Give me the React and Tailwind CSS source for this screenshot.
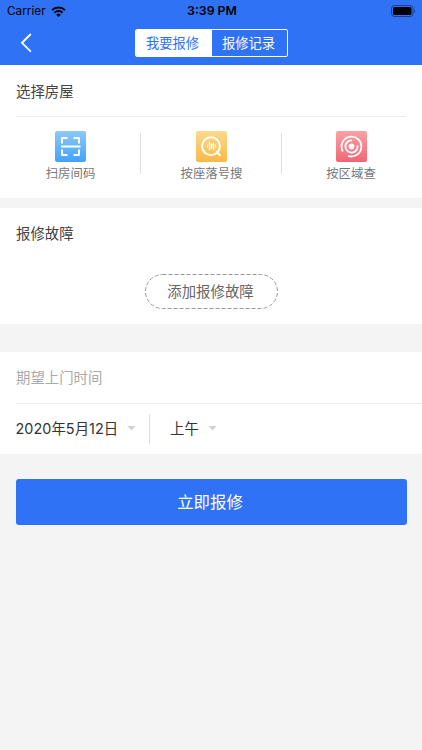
import { useState } from 'react'

const ScanIcon = () => (
  <svg width="31" height="31" viewBox="0 0 31 31" fill="none">
    <defs>
      <linearGradient id="scan" x1="0" y1="0" x2="0" y2="1">
        <stop offset="0" stopColor="#8cc9fb" />
        <stop offset="1" stopColor="#41a3fb" />
      </linearGradient>
    </defs>
    <rect width="31" height="31" rx="2" fill="url(#scan)" />
    <path
      d="M7 12.5V7H12.5M18.5 7H24v5.5M24 18.5V24h-5.5M12.5 24H7v-5.5M6 15.5h19.5"
      stroke="#fff"
      strokeWidth="2"
      strokeLinejoin="round"
    />
  </svg>
)

const SearchIcon = () => (
  <svg width="31" height="31" viewBox="0 0 31 31" fill="none">
    <defs>
      <linearGradient id="search" x1="0" y1="0" x2="0" y2="1">
        <stop offset="0" stopColor="#fdd98c" />
        <stop offset="1" stopColor="#f9b946" />
      </linearGradient>
    </defs>
    <rect width="31" height="31" rx="2" fill="url(#search)" />
    <circle cx="15" cy="15.2" r="8.9" stroke="#fff" strokeWidth="1.9" />
    <path d="M20.8 21L23.8 24.2" stroke="#fff" strokeWidth="1.9" strokeLinecap="round" />
    <path d="M11.5 14v2.4M13.5 11.6v7.2M15.5 12.8v4.8M17.5 11.8v6.8M19.5 14v2.4" stroke="#fff" strokeWidth="1.3" strokeLinecap="round" />
  </svg>
)

const AreaIcon = () => (
  <svg width="31" height="31" viewBox="0 0 31 31" fill="none">
    <defs>
      <linearGradient id="area" x1="0" y1="0" x2="0" y2="1">
        <stop offset="0" stopColor="#fba2a4" />
        <stop offset="1" stopColor="#f16574" />
      </linearGradient>
    </defs>
    <rect width="31" height="31" rx="2" fill="url(#area)" />
    <circle cx="15.5" cy="15.5" r="2.9" fill="#fff" />
    <g stroke="#fff" strokeWidth="1.8">
      <path d="M16 9.4A6.1 6.1 0 1 0 21.5 14.3" />
      <path d="M6.9 20.5A9.9 9.9 0 1 1 12 24.8" />
    </g>
  </svg>
)

const WifiIcon = () => (
  <svg width="15" height="11" viewBox="0 0 15 11" fill="none" stroke="#000" strokeWidth="2">
    <path d="M1 4.1a9.3 9.3 0 0 1 13 0" />
    <path d="M3.4 6.7a5.9 5.9 0 0 1 8.2 0" />
    <path d="M7.5 11L5.2 8.7a3.3 3.3 0 0 1 4.6 0z" fill="#000" stroke="none" />
  </svg>
)

const BatteryIcon = () => (
  <svg width="26" height="12" viewBox="0 0 26 12">
    <rect x="0.5" y="0.5" width="21.5" height="11" rx="3" fill="none" stroke="#000" strokeOpacity="0.45" />
    <rect x="2" y="2" width="18.5" height="8" rx="1.6" />
    <path d="M23.3 4.2c1.3.5 1.3 3.1 0 3.6z" fillOpacity="0.5" />
  </svg>
)

const Caret = () => (
  <svg width="9" height="5" viewBox="0 0 9 5">
    <path d="M0.3 0h8.4L4.5 4.5z" fill="#d2d2d2" />
  </svg>
)

const searchTypes = [
  { label: '扫房间码', Icon: ScanIcon },
  { label: '按座落号搜', Icon: SearchIcon },
  { label: '按区域查', Icon: AreaIcon },
]

const App = () => {
  const [tab, setTab] = useState('repair')

  const tabClass = (name) =>
    tab === name
      ? 'w-[76px] pt-px pr-0.5 bg-white text-[#3072f6]'
      : 'flex-1 pt-px pr-px text-white'

  return (
    <div className="min-h-screen bg-[#f4f4f4] text-[#444] font-['Inter','Noto_Sans_CJK_SC',sans-serif]">
      <header className="h-[65px] bg-[#3072f6]">
        <div className="grid h-[22px] grid-cols-3 items-center pl-[7px] pr-[5px] text-[11.8px] text-black">
          <div className="flex items-center gap-[5px]">
            <span className="leading-4">Carrier</span>
            <WifiIcon />
          </div>
          <span className="text-center text-[12.3px] leading-4 font-semibold">3:39 PM</span>
          <div className="flex justify-end">
            <BatteryIcon />
          </div>
        </div>
        <div className="grid grid-cols-[1fr_153px_1fr] pt-[7px]">
          <button className="flex items-center pl-5">
            <svg width="12" height="20" viewBox="0 0 12 20" fill="none" stroke="#fff" strokeWidth="1.9">
              <path d="M10.8 1L2 9.8l8.8 8.8" />
            </svg>
          </button>
          <div className="flex h-[28px] overflow-hidden rounded-[2px] border border-white text-[13.3px]">
            <button onClick={() => setTab('repair')} className={tabClass('repair')}>我要报修</button>
            <button onClick={() => setTab('record')} className={tabClass('record')}>报修记录</button>
          </div>
        </div>
      </header>

      <section className="h-[133px] bg-white">
        <div className="mx-4 flex h-[52px] items-center border-b border-[#ebebeb] pt-0.5 text-[14.4px]">选择房屋</div>
        <div className="grid grid-cols-[141px_141px_140px] pt-[14px]">
          {searchTypes.map(({ label, Icon }, idx) => (
            <div key={label} className="grid grid-cols-[1fr_1px]">
              <button className={idx < 2 ? 'flex flex-col items-center pl-px' : 'flex flex-col items-center pr-px'}>
                <Icon />
                <span className="mt-0.5 text-[12.4px] leading-5 text-[#777]">{label}</span>
              </button>
              {idx < 2 && <div className="mt-0.5 h-[41px] bg-[#dedede]" />}
            </div>
          ))}
        </div>
      </section>

      <section className="mt-2.5 h-[116px] bg-white">
        <div className="flex h-[51px] items-center pl-4 text-[14.4px]">报修故障</div>
        <button className="relative mx-auto mt-[15px] flex h-[35px] w-[133px] items-center justify-center pr-px text-[14.4px] text-[#666]">
          <svg className="absolute inset-0" width="133" height="35" fill="none">
            <rect x="0.5" y="0.5" width="132" height="34" rx="17" stroke="#999" strokeDasharray="4 2" />
          </svg>
          添加报修故障
        </button>
      </section>

      <section className="mt-7 h-[102px] bg-white">
        <div className="ml-4 flex h-[52px] items-center border-b border-[#ebebeb] text-[14.4px] text-[#aaa]">
          期望上门时间
        </div>
        <div className="flex h-[50px] items-center pl-[15.5px] text-[14.4px] text-[#333]">
          <button className="flex w-[133px] items-center gap-[9px]">
            <span className="tracking-[0.05px]">2020年5月12日</span>
            <Caret />
          </button>
          <div className="h-[30px] w-px bg-[#dedede]" />
          <button className="ml-[20.5px] flex items-center gap-[9px]">
            <span>上午</span>
            <Caret />
          </button>
        </div>
      </section>

      <div className="px-[15.5px] pt-[25px]">
        <button className="h-[46px] w-full rounded-[3px] bg-[#3072f6] pr-0.5 text-[16.4px] text-white">立即报修</button>
      </div>
    </div>
  )
}

export default App
